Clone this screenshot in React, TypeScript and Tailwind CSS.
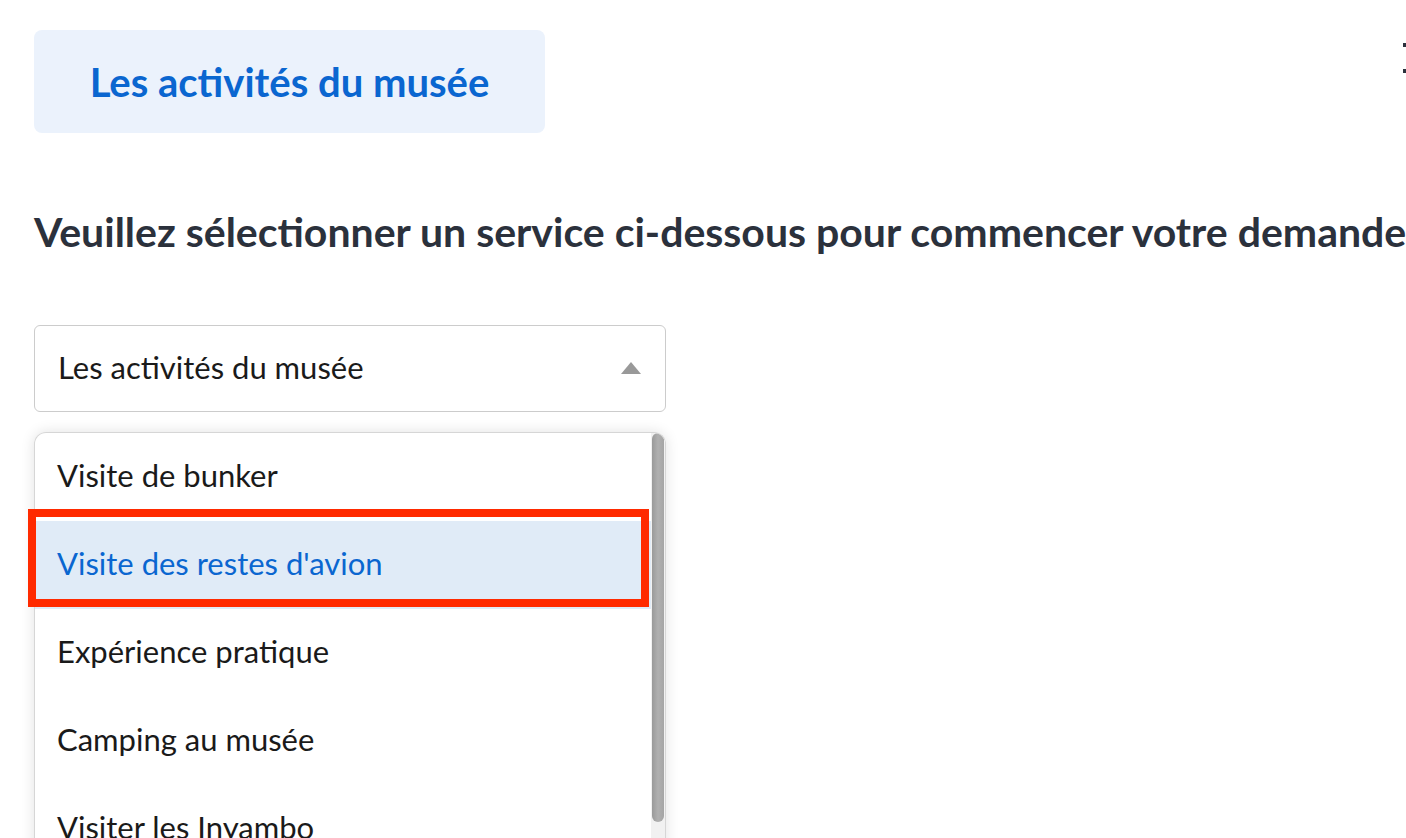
import React from "react";

const options = [
  "Visite de bunker",
  "Visite des restes d'avion",
  "Expérience pratique",
  "Camping au musée",
  "Visiter les Inyambo",
];

export default function App() {
  return (
    <div className="relative h-[838px] w-[1406px] overflow-hidden bg-white font-['Lato',sans-serif]">
      <div className="pl-[34px] pt-[30px]">
        <div className="flex h-[103px] w-[511px] items-center justify-center rounded-lg bg-[#ebf2fc]">
          <span className="text-[40px] font-bold text-[#0a66d0]">Les activités du musée</span>
        </div>

        <h2 className="mt-[75px] whitespace-nowrap text-[41px] font-bold leading-[48px] text-[#2b313c]">
          Veuillez sélectionner un service ci-dessous pour commencer votre demande
        </h2>

        <div className="mt-[69px] flex h-[87px] w-[632px] items-center justify-between rounded-md border border-[#cccccc] pb-[2px] pl-[23px] pr-[24px]">
          <span className="text-[31px] text-[#1a1a1a]">Les activités du musée</span>
          <span className="h-0 w-0 border-x-[10px] border-b-[12px] border-x-transparent border-b-[#999999]" />
        </div>

        <div className="relative mt-[20px] flex h-[440px] w-[632px] overflow-hidden rounded-t-xl border border-b-0 border-[#d6d6d6] shadow-[0_0_14px_rgba(0,0,0,0.12)]">
          <ul className="flex-1">
            {options.map((o, i) => (
              <li
                key={o}
                className={
                  i === 1
                    ? "flex h-[88px] items-center bg-[#e0ebf7] pb-[4px] pl-[22px] text-[31px] text-[#0a66d0]"
                    : "flex h-[88px] items-center pb-[4px] pl-[22px] text-[31px] text-[#1a1a1a]"
                }
              >
                {o}
              </li>
            ))}
          </ul>
          <div className="w-[14px] bg-[#f1f1f1] pl-px">
            <div className="h-[389px] w-[12px] rounded-full bg-gradient-to-r from-[#9a9a9a] via-[#b0b0b0] to-[#a5a5a5]" />
          </div>
        </div>
      </div>

      <div className="absolute left-[28px] top-[509px] h-[98px] w-[621px] border-[8px] border-[#ff2a00]" />
      <div className="absolute left-[1403px] top-[43px] h-[4px] w-[3px] bg-[#2b313c]" />
      <div className="absolute left-[1403px] top-[69px] h-[4px] w-[3px] bg-[#2b313c]" />
    </div>
  );
}
